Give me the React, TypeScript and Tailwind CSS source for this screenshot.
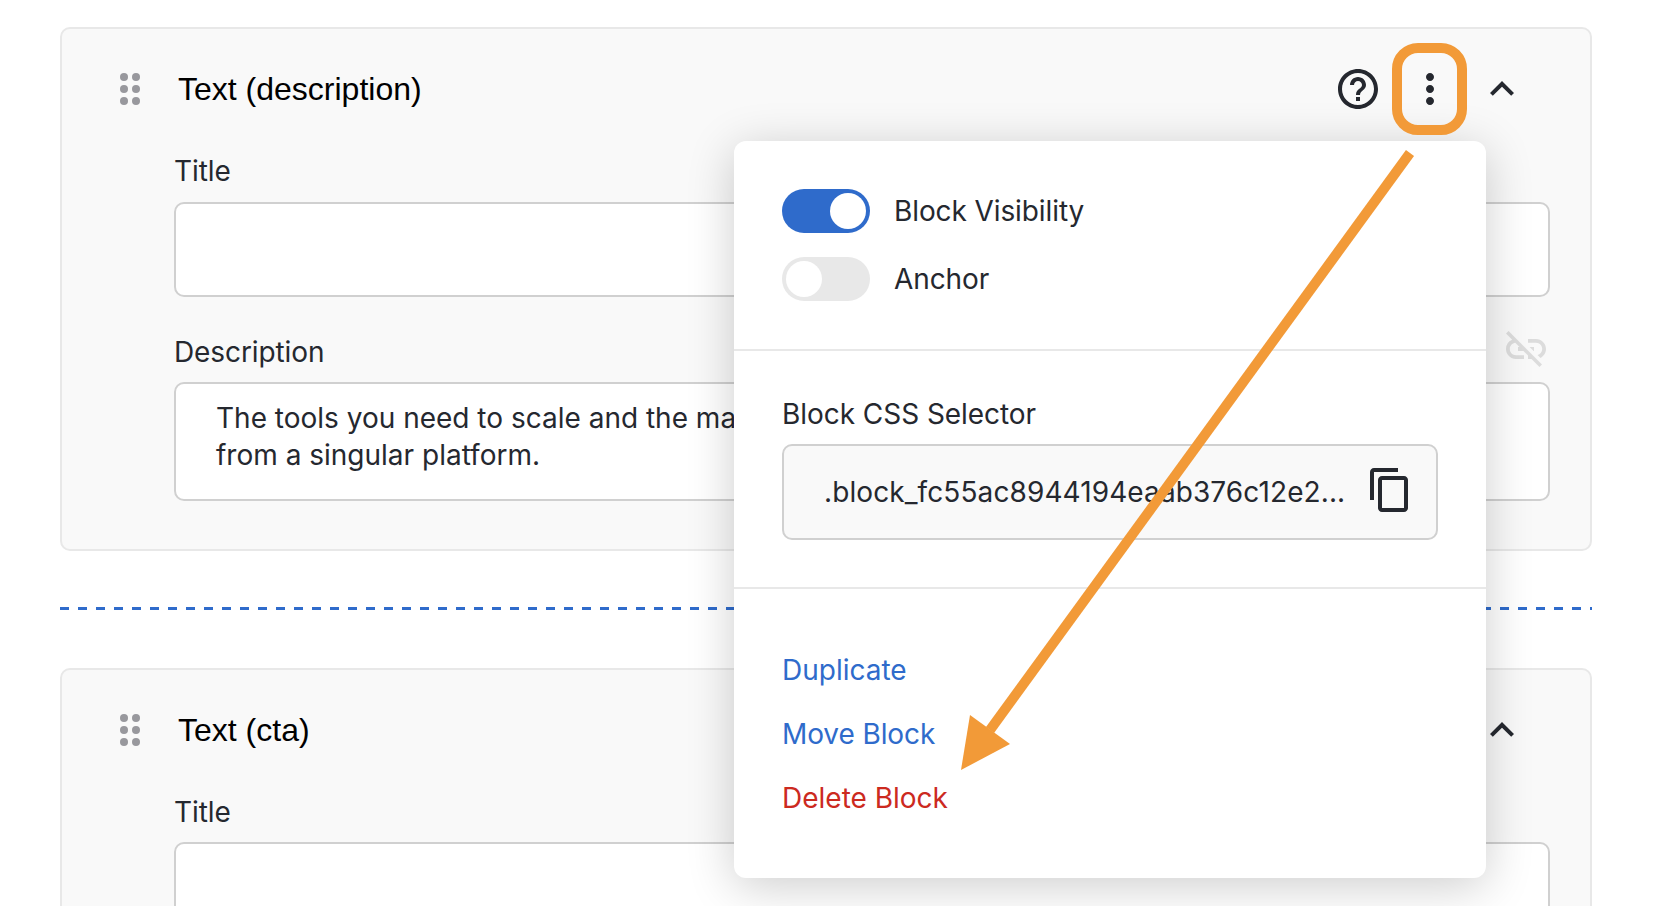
import { MdHelpOutline, MdKeyboardArrowUp, MdLinkOff, MdOutlineContentCopy, MdMoreVert } from "react-icons/md"

const inter = "font-['Inter',sans-serif]"

function DragDots() {
  return (
    <div className="grid w-[20px] shrink-0 grid-cols-2 gap-[4px]">
      {[0, 1, 2, 3, 4, 5].map((i) => (
        <span key={i} className="h-[8px] w-[8px] rounded-full bg-[#98989d]"></span>
      ))}
    </div>
  )
}

function Toggle({ on }: { on: boolean }) {
  return (
    <div className={`flex h-[44px] w-[88px] items-center rounded-full p-[4px] ${on ? "justify-end bg-[#2f6bcb]" : "justify-start bg-[#e8e8e8]"}`}>
      <span className="h-[36px] w-[36px] rounded-full bg-white"></span>
    </div>
  )
}

function Card({ title, children }: { title: string; children: React.ReactNode }) {
  return (
    <section className="rounded-[10px] border-2 border-[#e8e8e8] bg-[#f9f9f9] pb-[48px] pl-[58px] pr-[40px] pt-[39px]">
      <div className="flex h-[42px] items-center">
        <DragDots />
        <h3 className="ml-[38px] font-['Liberation_Sans',sans-serif] text-[32px] leading-[42px] text-black">{title}</h3>
      </div>
      <div className={`ml-[54px] mt-[43px] ${inter} text-[28px] text-[#25282f]`}>{children}</div>
    </section>
  )
}

function TitleField({ tight }: { tight?: boolean }) {
  return (
    <>
      <label className="block text-[28px] leading-[36px] tracking-[-0.05px]">Title</label>
      <div className={`${tight ? "mt-[12px]" : "mt-[13px]"} h-[95px] rounded-[10px] border-2 border-[#d0d0d0] bg-white`}></div>
    </>
  )
}

export default function App() {
  return (
    <div className={`relative h-[906px] w-[1654px] overflow-hidden bg-white pl-[60px] pr-[62px] pt-[27px] ${inter}`}>
      <Card title="Text (description)">
        <TitleField />
        <label className="mt-[37px] block text-[28px] leading-[36px] tracking-[-0.1px]">Description</label>
        <div className="mt-[12px] h-[119px] whitespace-pre rounded-[10px] border-2 border-[#d0d0d0] bg-white pl-[40px] pt-[16px] text-[28px] leading-[37px]">
          {"The tools you need to scale and the ma\nfrom a singular platform."}
        </div>
      </Card>

      {/* Insert line between blocks */}
      <div className="mb-[58px] mt-[56px] h-[3px] bg-[repeating-linear-gradient(90deg,#2f6bcb_0,#2f6bcb_9px,transparent_9px,transparent_18px)]"></div>

      <Card title="Text (cta)">
        <TitleField tight />
      </Card>

      {/* Header actions */}
      <MdHelpOutline className="absolute left-[1334px] top-[65px] text-[#25282f]" size={48} />
      <MdMoreVert className="absolute left-[1406px] top-[65px] text-[#25282f]" size={48} />
      <MdKeyboardArrowUp className="absolute left-[1478px] top-[65px] text-[#25282f]" size={48} />
      <MdKeyboardArrowUp className="absolute left-[1478px] top-[706px] text-[#25282f]" size={48} />
      <MdLinkOff className="absolute left-[1502px] top-[325px] text-[#dcdcdc]" size={48} />

      {/* Block menu */}
      <div className="absolute left-[734px] top-[141px] h-[737px] w-[752px] rounded-[12px] bg-white shadow-[0_8px_48px_rgba(0,0,0,0.2)]">
        <div className="flex h-[210px] flex-col gap-[24px] border-b-2 border-[#e8e8e8] pl-[48px] pt-[48px] text-[28px] tracking-[-0.1px] text-[#25282f]">
          <div className="flex items-center gap-[24px]">
            <Toggle on />
            <span>Block Visibility</span>
          </div>
          <div className="flex items-center gap-[24px]">
            <Toggle on={false} />
            <span>Anchor</span>
          </div>
        </div>
        <div className="h-[238px] border-b-2 border-[#e8e8e8] px-[48px] pt-[45px] text-[#25282f]">
          <div className="text-[28px] leading-[36px] tracking-[-0.05px]">Block CSS Selector</div>
          <div className="mt-[12px] flex h-[96px] items-center justify-between rounded-[10px] border-2 border-[#d0d0d0] bg-[#f9f9f9] pl-[40px] pr-[22px] text-[28px]">
            <span className="tracking-[0.1px]">.block_fc55ac8944194eaab376c12e2...</span>
            <MdOutlineContentCopy className="mb-[4px]" size={48} />
          </div>
        </div>
        <div className="flex flex-col gap-[24px] pl-[48px] pt-[61px] text-[28px] leading-[40px]">
          <a className="text-[#2f6bcb]">Duplicate</a>
          <a className="tracking-[-0.1px] text-[#2f6bcb]">Move Block</a>
          <a className="text-[#cc2a1f]">Delete Block</a>
        </div>
      </div>

      {/* Annotation: highlight and arrow */}
      <div className="absolute left-[1392px] top-[43px] h-[92px] w-[75px] rounded-[26px] border-[10px] border-[#f29a38]"></div>
      <svg className="absolute left-0 top-0" width="1654" height="906" fill="none">
        <line x1="1410" y1="153" x2="990" y2="730" stroke="#f29a38" strokeWidth="10" />
        <polygon points="970,715 1010,744 961,770" fill="#f29a38" />
      </svg>
    </div>
  )
}
